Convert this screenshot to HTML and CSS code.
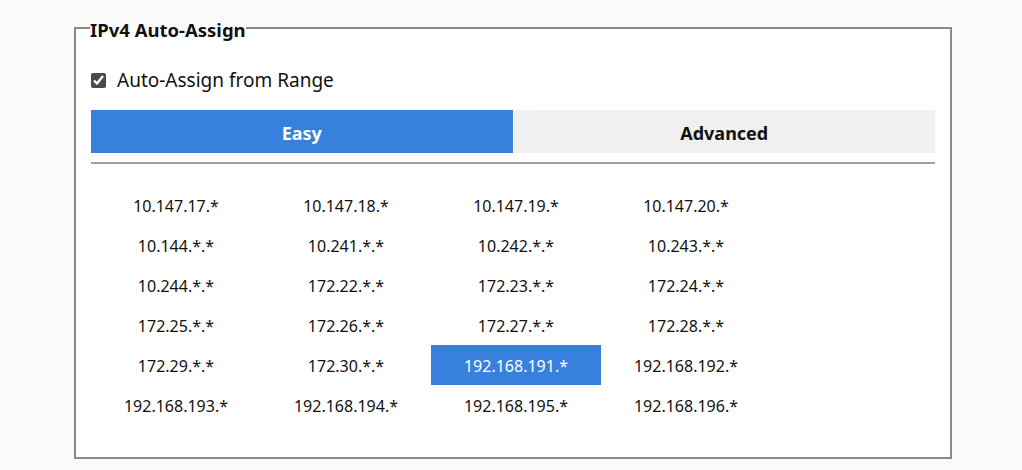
FILE: index.html
```html
<!DOCTYPE html>
<html>
<head>
<meta charset="utf-8">
<link rel="stylesheet" href="styles.css">
</head>
<body>
<fieldset class="panel">
  <legend class="panel-title">IPv4 Auto-Assign</legend>
  <label class="check-row"><input type="checkbox" checked class="check"> Auto-Assign from Range</label>
  <div class="tabs">
    <div class="tab tab-active">Easy</div>
    <div class="tab">Advanced</div>
  </div>
  <div class="divider"></div>
  <div class="ranges">
    <div class="range">10.147.17.*</div>
    <div class="range">10.147.18.*</div>
    <div class="range">10.147.19.*</div>
    <div class="range">10.147.20.*</div>
    <div class="range">10.144.*.*</div>
    <div class="range">10.241.*.*</div>
    <div class="range">10.242.*.*</div>
    <div class="range">10.243.*.*</div>
    <div class="range">10.244.*.*</div>
    <div class="range">172.22.*.*</div>
    <div class="range">172.23.*.*</div>
    <div class="range">172.24.*.*</div>
    <div class="range">172.25.*.*</div>
    <div class="range">172.26.*.*</div>
    <div class="range">172.27.*.*</div>
    <div class="range">172.28.*.*</div>
    <div class="range">172.29.*.*</div>
    <div class="range">172.30.*.*</div>
    <div class="range range-selected">192.168.191.*</div>
    <div class="range">192.168.192.*</div>
    <div class="range">192.168.193.*</div>
    <div class="range">192.168.194.*</div>
    <div class="range">192.168.195.*</div>
    <div class="range">192.168.196.*</div>
  </div>
</fieldset>
</body>
</html>
```
FILE: styles.css
```css
html, body {
  margin: 0;
  padding: 0;
  background: #fafafa;
}
body {
  font-family: "Noto Sans", "Open Sans", sans-serif;
  color: #111;
  padding: 14px 0 0 74px;
}
.panel {
  width: 844px;
  margin: 0;
  padding: 0 15px 32px 15px;
  border: 2px solid #8a8a8a;
  background: #fff;
}
.panel-title {
  font-weight: 700;
  font-size: 18.5px;
  line-height: 24px;
  padding: 4px 0 0 0;
  margin-left: -1px;
}
.check-row {
  display: flex;
  align-items: center;
  gap: 11px;
  font-size: 19px;
  line-height: 24px;
  margin-top: 26px;
}
.check {
  margin: 0;
  width: 15px;
  height: 15px;
  accent-color: #4a4a4a;
}
.tabs {
  display: flex;
  margin-top: 18px;
  height: 43px;
}
.tab {
  flex: 1;
  display: flex;
  align-items: center;
  justify-content: center;
  background: #f0f0f0;
  font-weight: 700;
  font-size: 18px;
  padding-top: 2px;
}
.tab-active {
  background: #3780de;
  color: #fff;
  margin-right: 1px;
}
.divider {
  height: 2px;
  background: #a0a0a0;
  margin-top: 9px;
}
.ranges {
  display: grid;
  grid-template-columns: repeat(4, 170px);
  grid-auto-rows: 40px;
  margin-top: 21px;
}
.range {
  display: flex;
  align-items: center;
  justify-content: center;
  font-size: 16px;
  padding-top: 2px;
}
.range-selected {
  background: #3780de;
  color: #fff;
}
```
